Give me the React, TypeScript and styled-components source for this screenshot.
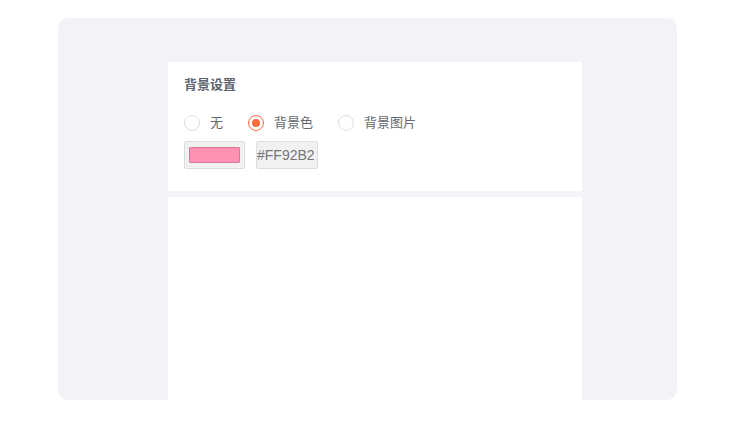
import React, { useState } from "react";
import styled, { createGlobalStyle } from "styled-components";

const Global = createGlobalStyle`
  html, body { margin: 0; padding: 0; background: #ffffff; }
  body { font-family: "Liberation Sans", "Noto Sans CJK SC", Arial, sans-serif; }
  * { box-sizing: border-box; }
`;

const Page = styled.div`
  width: 750px;
  height: 432px;
  padding: 18px 0 0 58px;
`;

const Stage = styled.div`
  width: 619px;
  height: 382px;
  background: #f2f3f7;
  border-radius: 10px;
  padding: 44px 0 0 110px;
  display: flex;
`;

const Panel = styled.div`
  width: 414px;
  display: flex;
  flex-direction: column;
`;

const Section = styled.div`
  background: #ffffff;
  height: 129px;
  padding: 14px 16px 0;
  display: flex;
  flex-direction: column;
`;

const Divider = styled.div`
  height: 6px;
  background: #f4f5f8;
`;

const Body = styled.div`
  flex: 1;
  background: #ffffff;
`;

const Title = styled.div`
  font-size: 13px;
  line-height: 18px;
  font-weight: bold;
  color: #5d646d;
`;

const RadioRow = styled.div`
  margin-top: 21px;
  display: flex;
  align-items: center;
  height: 16px;
`;

const RadioItem = styled.label`
  display: flex;
  align-items: center;
  margin-right: 25px;
  cursor: pointer;
`;

const Circle = styled.span<{ $on: boolean }>`
  width: 16px;
  height: 16px;
  border-radius: 50%;
  border: 1px solid ${(p) => (p.$on ? "#ff6a3c" : "#dcdee2")};
  background: #ffffff;
  display: flex;
  align-items: center;
  justify-content: center;
  margin-right: 10px;
  &::after {
    content: "";
    width: 8px;
    height: 8px;
    border-radius: 50%;
    background: ${(p) => (p.$on ? "#ff6a3c" : "transparent")};
  }
`;

const Label = styled.span`
  font-size: 13px;
  color: #666a70;
  line-height: 16px;
`;

const ColorRow = styled.div`
  margin-top: 10px;
  display: flex;
  gap: 11px;
`;

const SwatchBox = styled.div`
  width: 61px;
  height: 28px;
  background: #f1f1f1;
  border: 1px solid #dddddd;
  border-radius: 2px;
  padding: 5px 4px;
`;

const Swatch = styled.div<{ $color: string }>`
  width: 100%;
  height: 100%;
  background: ${(p) => p.$color};
  border: 1px solid #e07797;
  border-radius: 1px;
`;

const HexBox = styled.div`
  width: 62px;
  height: 28px;
  background: #f1f1f1;
  border: 1px solid #dddddd;
  border-radius: 2px;
  font-size: 14px;
  color: #757575;
  line-height: 26px;
  padding-left: 0;
  white-space: nowrap;
  overflow: hidden;
  font-family: "Liberation Sans", Arial, sans-serif;
`;

const options = ["无", "背景色", "背景图片"];

export default function App() {
  const [sel, setSel] = useState(1);
  const color = "#FF92B2";
  return (
    <Page>
      <Global />
      <Stage>
        <Panel>
          <Section>
            <Title>背景设置</Title>
            <RadioRow>
              {options.map((o, i) => (
                <RadioItem key={o} onClick={() => setSel(i)}>
                  <Circle $on={sel === i} />
                  <Label>{o}</Label>
                </RadioItem>
              ))}
            </RadioRow>
            <ColorRow>
              <SwatchBox>
                <Swatch $color={color} />
              </SwatchBox>
              <HexBox>{color}</HexBox>
            </ColorRow>
          </Section>
          <Divider />
          <Body />
        </Panel>
      </Stage>
    </Page>
  );
}
